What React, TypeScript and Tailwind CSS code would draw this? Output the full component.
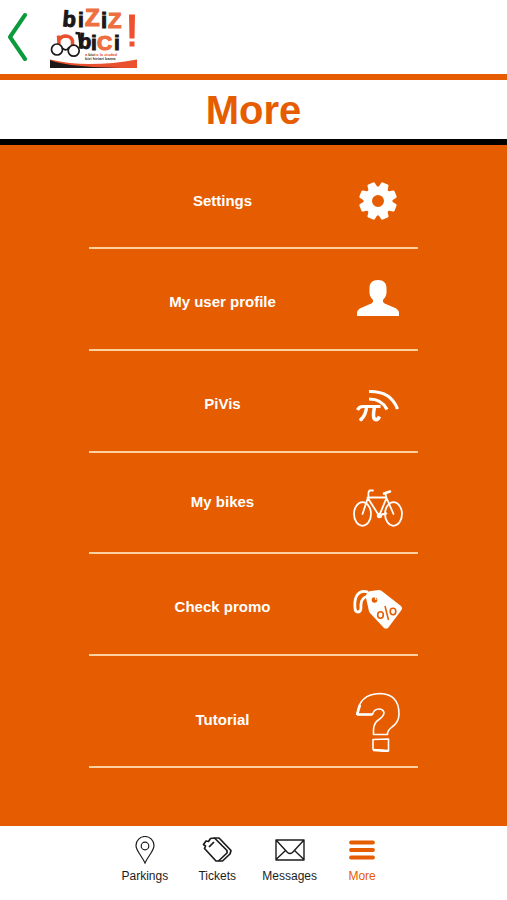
import type { ReactNode } from "react";

function Logo() {
  return (
    <svg width="90" height="70" viewBox="49 0 90 70" role="img" aria-label="Biziz nbici">
      <g fontFamily='"Liberation Sans", Arial, sans-serif' fontWeight="700">
        <g fill="#1c1817" stroke="#1c1817" strokeWidth="1">
          <text x="62" y="26" fontSize="22" transform="rotate(5 62 26)">b</text>
          <text x="78" y="27" fontSize="21">i</text>
          <text x="101" y="28" fontSize="22">i</text>
          <text x="78" y="48" fontSize="21" transform="rotate(5 78 48)">b</text>
          <text x="91" y="50" fontSize="21">i</text>
          <text x="114" y="50" fontSize="21">i</text>
        </g>
        <g fill="#ee6f3f" stroke="#ee6f3f" strokeWidth="1.200">
          <text x="85" y="26" fontSize="24">Z</text>
          <text x="108" y="28" fontSize="22">Z</text>
          <text x="97" y="50" fontSize="21">C</text>
        </g>
        <text x="85" y="56" fontSize="4"><tspan fill="#e8502e">a</tspan><tspan fill="#333"> bici </tspan><tspan fill="#e8502e">a la ciudad</tspan></text>
        <text x="85" y="60" fontSize="4" fill="#333">bizi hiriari bama</text>
      </g>
      <path d="M129 14.500h6l-.5 24h-5zM129.500 41.500h5v5h-5z" fill="#ee5030" />
      <path d="M59 44L58.500 35.500M59.500 40Q61 36 66 36Q71.500 36.500 72.500 41V45" fill="none" stroke="#e8502e" strokeWidth="3.500" />
      <g fill="none" stroke="#1c1817" strokeWidth="1.700">
        <circle cx="57" cy="49.500" r="5.500" />
        <circle cx="73.700" cy="50.700" r="5.500" />
        <path d="M62 48Q67 52 69 47" />
        <path d="M75.500 33L79 33.500L81 48" strokeWidth="2.600" />
      </g>
      <path d="M50 59.500Q70 64 89 64Q113 64 137 59.500V68H50z" fill="#e8502e" />
      <path d="M50 60Q69 68 137 68H50z" fill="#1c1817" />
    </svg>
  );
}

function GearIcon() {
  const angles = [22.5, 67.5, 112.5, 157.5, 202.5, 247.5, 292.5, 337.5];
  return (
    <svg width="38" height="38" viewBox="-19 -19 38 38" fill="#fff" aria-hidden="true">
      {angles.map((a) => (
        <path key={a} d="M-5 -12L-4 -17.800Q-3.700 -19 -2.600 -19H2.600Q3.700 -19 4 -17.800L5 -12z" transform={`rotate(${a})`} />
      ))}
      <path fillRule="evenodd" d="M0 -14.500A14.500 14.500 0 1 1 0 14.500A14.500 14.500 0 1 1 0 -14.500M0 -6A6 6 0 1 0 0 6A6 6 0 1 0 0 -6" />
    </svg>
  );
}

function UserIcon() {
  return (
    <svg width="42" height="38" viewBox="0 0 42 38" fill="#fff" aria-hidden="true">
      <path d="M21 1C15.500 1 12.500 4 12.500 9V13C12.500 17 14 18.500 16 21C16.500 23.500 15 24.500 12 25.500L5 28.500Q0 30.500 0 34V37H42V34Q42 30.500 37 28.500L30 25.500C27 24.500 25.500 23.500 26 21C28 18.500 29.500 17 29.500 13V9C29.500 4 26.500 1 21 1z" />
    </svg>
  );
}

function PivisIcon() {
  return (
    <svg width="44" height="36" viewBox="356 388 44 36" fill="none" stroke="#fff" aria-hidden="true">
      <path d="M369 391.500Q391 391 397.500 409M369 399Q382 399 387 409.500" strokeWidth="3.200" />
      <path d="M357.500 410Q359 406.500 363 406.500H380.500" strokeWidth="3.200" />
      <path d="M366.500 407Q366 415 361 419.500" strokeWidth="3.400" />
      <path d="M374.500 407Q372.500 417 374.500 419Q377.500 421 379.500 416.500" strokeWidth="3.600" />
      <circle cx="361" cy="419.500" r="1.400" fill="#fff" />
    </svg>
  );
}

function BikeIcon() {
  return (
    <svg width="50" height="40" viewBox="353 488 50 40" fill="none" stroke="#fff" strokeWidth="1.800" strokeLinecap="round" strokeLinejoin="round" aria-hidden="true">
      <ellipse cx="362.500" cy="514" rx="8.500" ry="11.800" />
      <ellipse cx="393.500" cy="514" rx="8.500" ry="11.800" />
      <path d="M373 490.500H369.500Q368 492 368.500 496L362.500 514M367.500 497.500L378 514M386.500 497.500H368M386.500 498L379.500 515M387 499L393.500 514M386.500 498L385.500 494" />
      <path d="M384 493.500L390 491.500" strokeWidth="2.600" />
      <circle cx="379.500" cy="515.500" r="1.800" fill="#fff" />
      <path d="M379.500 515L386.500 513.500" />
    </svg>
  );
}

function PromoIcon() {
  return (
    <svg width="50" height="42" viewBox="353 588 50 42" fill="none" aria-hidden="true">
      <path d="M368 592C358 589 354 597 355 608Q355 612 358 612Q361 612 361 607Q360 598 368 596" stroke="#fff" strokeWidth="2.800" />
      <path d="M367 593Q368 591 371 591L379 590Q381 590 383 592L401 606Q403 608 401.500 610L388 628Q386 629.500 384 628L370 613Q368.500 611 368.500 609L366 598Q365.500 595 367 593z" fill="#fff" />
      <circle cx="374.500" cy="600" r="2.800" fill="#e65c00" />
      <path d="M370 594Q375 594 376 600" stroke="#fff" strokeWidth="1.200" />
      <g stroke="#e65c00" strokeWidth="1.600">
        <ellipse cx="380.500" cy="615" rx="2.800" ry="3.200" />
        <ellipse cx="393" cy="611.500" rx="2.800" ry="3.200" />
        <path d="M385 606L388.500 620" />
      </g>
    </svg>
  );
}

function QuestionIcon() {
  return (
    <svg width="46" height="60" viewBox="355 691 46 60" fill="none" stroke="#fff" strokeWidth="1.600" strokeLinejoin="round" aria-hidden="true">
      <path d="M357 713.500Q359 693 380 692.500Q399 693 399 713Q399 721 392 726Q387 730 387.500 733.500H373.500V729Q373.500 722 379 718.500Q384 715 384 711.500Q383 708 379 708Q374 708 372.500 713.500z" />
      <path d="M373 738.500L388.500 738V750L373 748.500z" />
      <path d="M357 714L360 704M373 749L388 750M357 713.500H372" strokeWidth="2.600" />
    </svg>
  );
}

function PinIcon() {
  return (
    <svg width="20" height="28" viewBox="0 0 20 28" fill="none" stroke="#1c1c1c" strokeWidth="1.200" aria-hidden="true">
      <path d="M10 27C7 20 1 15 1 9.500A9 9 0 0 1 19 9.500C19 15 13 20 10 27z" />
      <circle cx="10" cy="10" r="3.800" />
    </svg>
  );
}

function TicketsIcon() {
  return (
    <svg width="30" height="28" viewBox="202 836 30 28" fill="none" stroke="#1c1c1c" strokeWidth="1.700" strokeLinejoin="round" aria-hidden="true">
      <path d="M210.500 838.500L214.500 838L227 850.500V853L218.500 861H216L204.500 848.500L205.500 846L203.500 844.500L206 841L208.500 841.500z" />
      <path d="M214.500 838H219L221 840L231 850.500L230 854L222.500 861H218.500" />
      <path d="M209 847L214 842" />
    </svg>
  );
}

function EnvelopeIcon() {
  return (
    <svg width="30" height="22" viewBox="0 0 30 22" fill="none" stroke="#1c1c1c" strokeWidth="1.400" strokeLinejoin="round" aria-hidden="true">
      <path d="M1 1H29V21H1zM1 1L12.500 13.500Q15 15.500 17.500 13.500L29 1M1 20.500L10.500 11.500M29 20.500L19.500 11.500" />
    </svg>
  );
}

function MenuIcon() {
  return (
    <svg width="26" height="20" viewBox="0 0 26 20" stroke="#e65c00" strokeWidth="3.800" strokeLinecap="round" aria-hidden="true">
      <path d="M2 2.500H24M2 10H24M2 17.500H24" />
    </svg>
  );
}

const rows: { label: string; icon: ReactNode; size: string; text: string }[] = [
  { label: "Settings", icon: <GearIcon />, size: "h-[104px] pt-2", text: "" },
  { label: "My user profile", icon: <UserIcon />, size: "h-[102px] pb-1", text: "pt-2" },
  { label: "PiVis", icon: <PivisIcon />, size: "h-[102px] pt-2", text: "pb-1" },
  { label: "My bikes", icon: <BikeIcon />, size: "h-[101px] pt-2", text: "pb-3" },
  { label: "Check promo", icon: <PromoIcon />, size: "h-[102px] pt-2", text: "pb-1" },
  { label: "Tutorial", icon: <QuestionIcon />, size: "h-[112px] pt-5", text: "pb-1" },
];

const tabs: { label: string; icon: ReactNode; active?: boolean }[] = [
  { label: "Parkings", icon: <PinIcon /> },
  { label: "Tickets", icon: <TicketsIcon /> },
  { label: "Messages", icon: <EnvelopeIcon /> },
  { label: "More", icon: <MenuIcon />, active: true },
];

export default function App() {
  return (
    <div className="flex min-h-screen flex-col bg-white font-['Liberation_Sans',Arial,sans-serif]">
      <header className="flex h-20 items-start gap-5 border-b-6 border-[#e65c00] pl-2">
        <button type="button" aria-label="Back" className="mt-3">
          <svg width="21" height="50" viewBox="0 0 21 50" fill="none" stroke="#0b9a3c" strokeWidth="4" strokeLinecap="round" strokeLinejoin="round" aria-hidden="true">
            <path d="M17 3L2 25L17 47" />
          </svg>
        </button>
        <Logo />
      </header>
      <div className="flex h-[65px] items-center justify-center border-b-6 border-black">
        <h1 className="text-[40px] leading-10 font-bold text-[#e65c00]">More</h1>
      </div>
      <main className="flex-1 bg-[#e65c00]">
        <ul className="mx-auto w-[65%]">
          {rows.map((row) => (
            <li key={row.label} className="border-b-2 border-[#ffd0a0]">
              <button type="button" className={`-mb-[2px] flex w-full items-center ${row.size}`}>
                <span className={`flex-1 pl-[18px] text-center text-[15px] leading-5 font-bold text-white ${row.text}`}>{row.label}</span>
                <span className="flex w-20 justify-center">{row.icon}</span>
              </button>
            </li>
          ))}
        </ul>
      </main>
      <nav className="h-[74px] bg-white">
        <ul className="mx-auto flex w-4/7">
          {tabs.map((tab) => (
            <li key={tab.label} className="flex-1">
              <button
                type="button"
                aria-current={tab.active ? "page" : undefined}
                className={`flex w-full flex-col items-center pt-2 text-xs ${tab.active ? "text-[#e65c00]" : "text-[#1c1c1c]"}`}
              >
                <span className="flex h-8 items-center">{tab.icon}</span>
                <span className="mt-[2px]">{tab.label}</span>
              </button>
            </li>
          ))}
        </ul>
      </nav>
    </div>
  );
}
